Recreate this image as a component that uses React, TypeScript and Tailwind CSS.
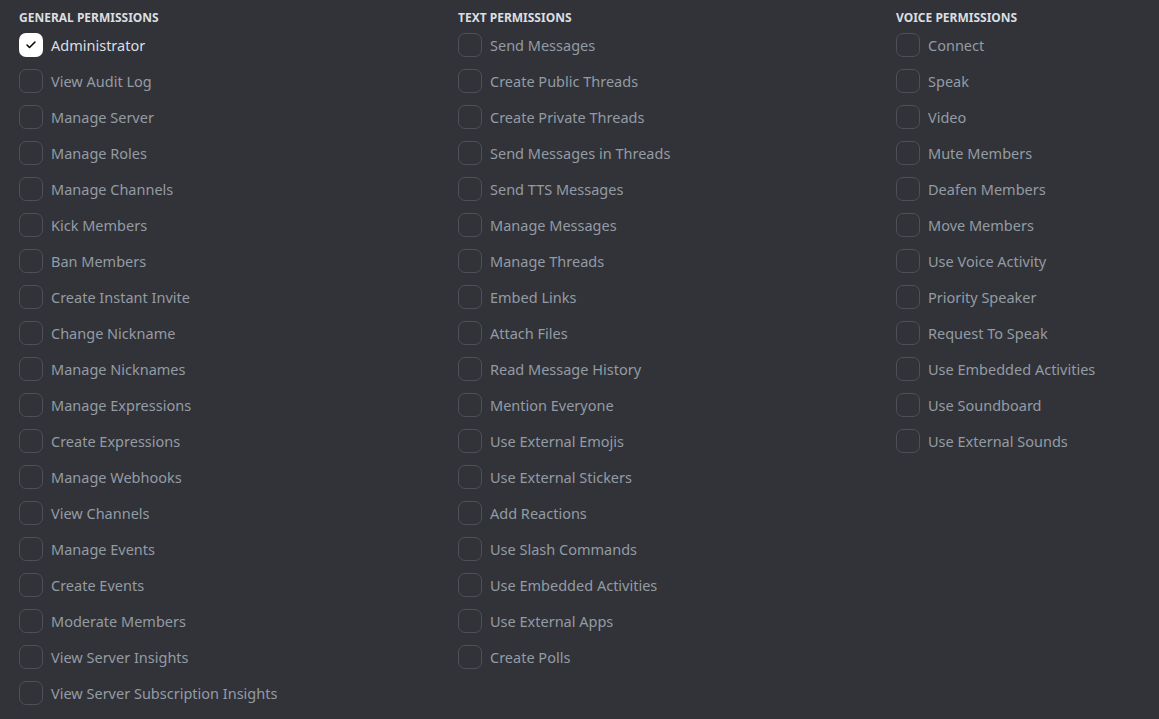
import { Check } from "lucide-react";

const general = [
  "Administrator",
  "View Audit Log",
  "Manage Server",
  "Manage Roles",
  "Manage Channels",
  "Kick Members",
  "Ban Members",
  "Create Instant Invite",
  "Change Nickname",
  "Manage Nicknames",
  "Manage Expressions",
  "Create Expressions",
  "Manage Webhooks",
  "View Channels",
  "Manage Events",
  "Create Events",
  "Moderate Members",
  "View Server Insights",
  "View Server Subscription Insights",
];

const text = [
  "Send Messages",
  "Create Public Threads",
  "Create Private Threads",
  "Send Messages in Threads",
  "Send TTS Messages",
  "Manage Messages",
  "Manage Threads",
  "Embed Links",
  "Attach Files",
  "Read Message History",
  "Mention Everyone",
  "Use External Emojis",
  "Use External Stickers",
  "Add Reactions",
  "Use Slash Commands",
  "Use Embedded Activities",
  "Use External Apps",
  "Create Polls",
];

const voice = [
  "Connect",
  "Speak",
  "Video",
  "Mute Members",
  "Deafen Members",
  "Move Members",
  "Use Voice Activity",
  "Priority Speaker",
  "Request To Speak",
  "Use Embedded Activities",
  "Use Soundboard",
  "Use External Sounds",
];

function PermRow({ label, checked }: { label: string; checked?: boolean }) {
  return (
    <label className="flex h-9 items-center gap-2 cursor-pointer">
      {checked ? (
        <span className="flex h-6 w-6 shrink-0 items-center justify-center rounded-[7px] bg-white">
          <Check className="h-3 w-3 text-black" strokeWidth={3} />
        </span>
      ) : (
        <span className="h-6 w-6 shrink-0 rounded-[7px] border border-[#4e5058]" />
      )}
      <span className={`whitespace-nowrap text-[14.5px] leading-5 ${checked ? "text-[#dbdee1]" : "text-[#949ba4]"}`}>
        {label}
      </span>
    </label>
  );
}

function Column({
  title,
  items,
  checked = [],
  className = "",
}: {
  title: string;
  items: string[];
  checked?: string[];
  className?: string;
}) {
  return (
    <div className={`flex flex-col ${className}`}>
      <h3 className="mb-px h-4 text-[12px] font-bold uppercase leading-4 text-[#dbdee1]">{title}</h3>
      {items.map((item) => (
        <PermRow key={item} label={item} checked={checked.includes(item)} />
      ))}
    </div>
  );
}

export default function App() {
  return (
    <div className="min-h-[719px] w-full bg-[#313338] pl-[19px] pt-[10px] font-['Noto_Sans',sans-serif]">
      <div className="flex">
        <Column className="w-[439px] shrink-0" title="General Permissions" items={general} checked={["Administrator"]} />
        <Column className="w-[438px] shrink-0" title="Text Permissions" items={text} />
        <Column className="flex-1" title="Voice Permissions" items={voice} />
      </div>
    </div>
  );
}
